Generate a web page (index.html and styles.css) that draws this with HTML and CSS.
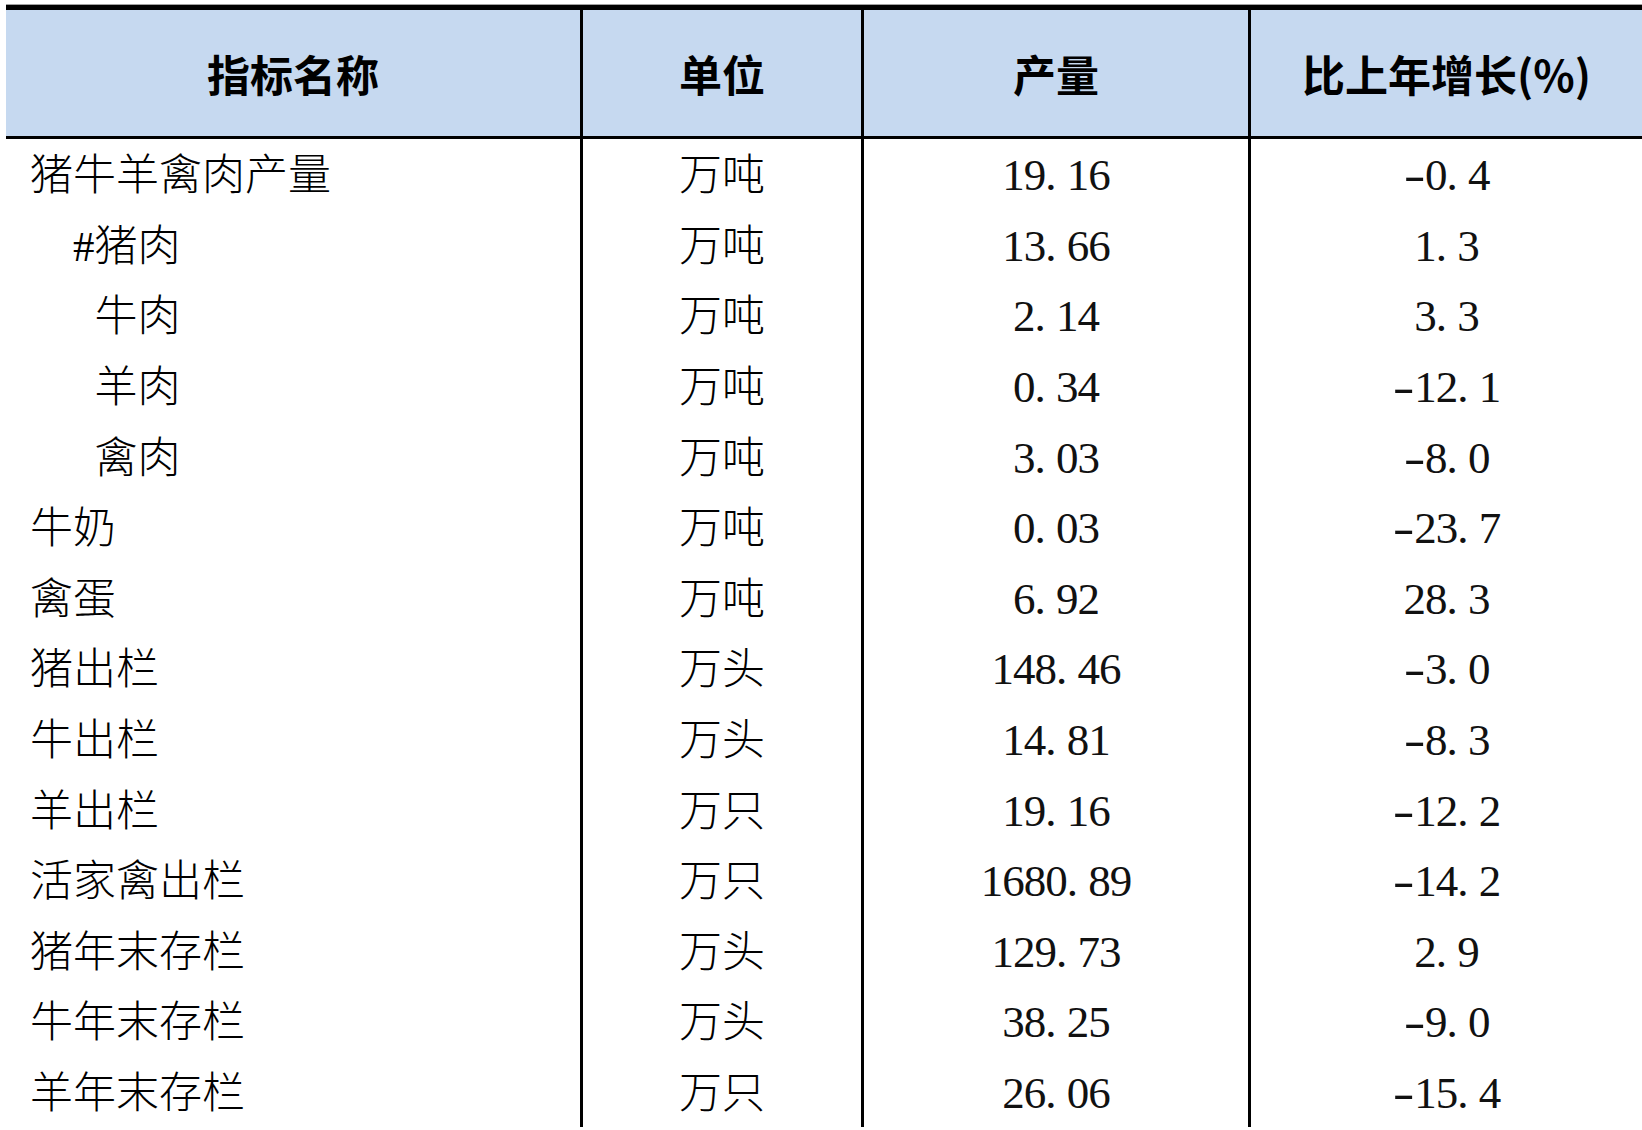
FILE: index.html
```html
<!DOCTYPE html>
<html lang="zh-CN">
<head>
<meta charset="utf-8">
<title>畜牧业产品产量</title>
<link rel="stylesheet" href="styles.css">
</head>
<body>
<div class="sheet">
  <div class="grid">
    <div class="cell head">指标名称</div>
    <div class="cell head bl">单位</div>
    <div class="cell head bl">产量</div>
    <div class="cell head bl">比上年增长(%)</div>

    <div class="cell l">猪牛羊禽肉产量</div><div class="cell c bl">万吨</div><div class="cell c bl"><span class="num">19<span class="pt">.</span>16</span></div><div class="cell c bl"><span class="num"><span class="mn">-</span>0<span class="pt">.</span>4</span></div>
    <div class="cell i1">#猪肉</div><div class="cell c bl">万吨</div><div class="cell c bl"><span class="num">13<span class="pt">.</span>66</span></div><div class="cell c bl"><span class="num">1<span class="pt">.</span>3</span></div>
    <div class="cell i2">牛肉</div><div class="cell c bl">万吨</div><div class="cell c bl"><span class="num">2<span class="pt">.</span>14</span></div><div class="cell c bl"><span class="num">3<span class="pt">.</span>3</span></div>
    <div class="cell i2">羊肉</div><div class="cell c bl">万吨</div><div class="cell c bl"><span class="num">0<span class="pt">.</span>34</span></div><div class="cell c bl"><span class="num"><span class="mn">-</span>12<span class="pt">.</span>1</span></div>
    <div class="cell i2">禽肉</div><div class="cell c bl">万吨</div><div class="cell c bl"><span class="num">3<span class="pt">.</span>03</span></div><div class="cell c bl"><span class="num"><span class="mn">-</span>8<span class="pt">.</span>0</span></div>
    <div class="cell l">牛奶</div><div class="cell c bl">万吨</div><div class="cell c bl"><span class="num">0<span class="pt">.</span>03</span></div><div class="cell c bl"><span class="num"><span class="mn">-</span>23<span class="pt">.</span>7</span></div>
    <div class="cell l">禽蛋</div><div class="cell c bl">万吨</div><div class="cell c bl"><span class="num">6<span class="pt">.</span>92</span></div><div class="cell c bl"><span class="num">28<span class="pt">.</span>3</span></div>
    <div class="cell l">猪出栏</div><div class="cell c bl">万头</div><div class="cell c bl"><span class="num">148<span class="pt">.</span>46</span></div><div class="cell c bl"><span class="num"><span class="mn">-</span>3<span class="pt">.</span>0</span></div>
    <div class="cell l">牛出栏</div><div class="cell c bl">万头</div><div class="cell c bl"><span class="num">14<span class="pt">.</span>81</span></div><div class="cell c bl"><span class="num"><span class="mn">-</span>8<span class="pt">.</span>3</span></div>
    <div class="cell l">羊出栏</div><div class="cell c bl">万只</div><div class="cell c bl"><span class="num">19<span class="pt">.</span>16</span></div><div class="cell c bl"><span class="num"><span class="mn">-</span>12<span class="pt">.</span>2</span></div>
    <div class="cell l">活家禽出栏</div><div class="cell c bl">万只</div><div class="cell c bl"><span class="num">1680<span class="pt">.</span>89</span></div><div class="cell c bl"><span class="num"><span class="mn">-</span>14<span class="pt">.</span>2</span></div>
    <div class="cell l">猪年末存栏</div><div class="cell c bl">万头</div><div class="cell c bl"><span class="num">129<span class="pt">.</span>73</span></div><div class="cell c bl"><span class="num">2<span class="pt">.</span>9</span></div>
    <div class="cell l">牛年末存栏</div><div class="cell c bl">万头</div><div class="cell c bl"><span class="num">38<span class="pt">.</span>25</span></div><div class="cell c bl"><span class="num"><span class="mn">-</span>9<span class="pt">.</span>0</span></div>
    <div class="cell l">羊年末存栏</div><div class="cell c bl">万只</div><div class="cell c bl"><span class="num">26<span class="pt">.</span>06</span></div><div class="cell c bl"><span class="num"><span class="mn">-</span>15<span class="pt">.</span>4</span></div>
  </div>
</div>
</body>
</html>
```

FILE: styles.css
```css
html, body {
  margin: 0;
  padding: 0;
  background: #ffffff;
}

body {
  overflow: hidden;
}

.sheet {
  margin: 4px 0 0 6px;
  border-top: 1px solid #a0a0a0;
}

.grid {
  display: grid;
  grid-template-columns: 574px 281px 387px 1fr;
  grid-template-rows: 129px repeat(14, 70.6px);
  border-top: 5px solid #000000;
}

.cell {
  box-sizing: border-box;
  display: flex;
  align-items: center;
  white-space: nowrap;
  color: #000000;
  font-family: "Liberation Serif", "Noto Sans CJK SC", serif;
  font-weight: 300;
  font-size: 43px;
  line-height: 1;
  padding-top: 3px;
}

.head {
  justify-content: center;
  padding-top: 0;
  background: #c6d9f0;
  border-bottom: 3px solid #000000;
  font-family: "Noto Sans CJK SC", sans-serif;
  font-weight: 700;
}

.bl {
  border-left: 3px solid #000000;
}

.c {
  justify-content: center;
}

.l {
  padding-left: 24px;
}

.i1 {
  padding-left: 67px;
}

.i2 {
  padding-left: 88.5px;
}

.num {
  font-size: 45px;
  letter-spacing: -1px;
  color: #111111;
}

.pt {
  display: inline-block;
  width: 21.5px;
  letter-spacing: 0;
}

.mn {
  display: inline-block;
  width: 21.5px;
  letter-spacing: 0;
  text-align: center;
  transform: scaleX(1.45);
}
```
